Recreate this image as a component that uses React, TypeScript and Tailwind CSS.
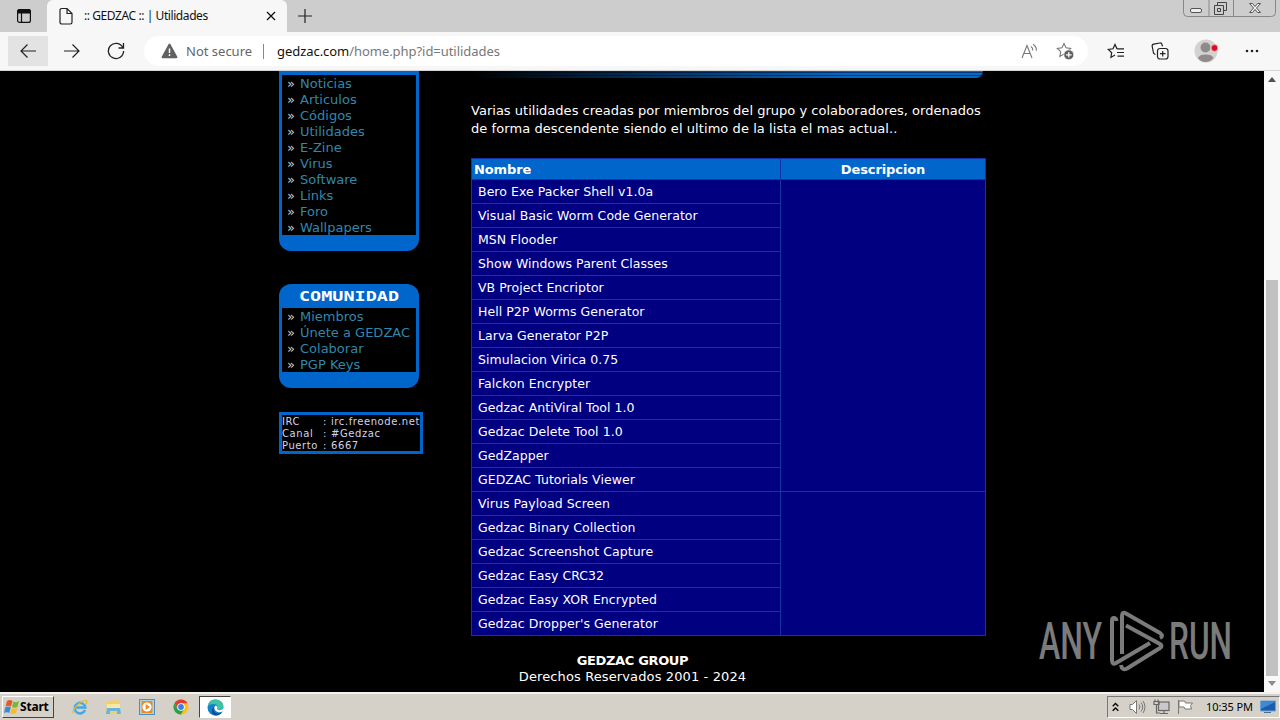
import React from 'react';

const sections = ['Noticias', 'Articulos', 'Códigos', 'Utilidades', 'E-Zine', 'Virus', 'Software', 'Links', 'Foro', 'Wallpapers'];
const community = ['Miembros', 'Únete a GEDZAC', 'Colaborar', 'PGP Keys'];
const tools = [
  'Bero Exe Packer Shell v1.0a',
  'Visual Basic Worm Code Generator',
  'MSN Flooder',
  'Show Windows Parent Classes',
  'VB Project Encriptor',
  'Hell P2P Worms Generator',
  'Larva Generator P2P',
  'Simulacion Virica 0.75',
  'Falckon Encrypter',
  'Gedzac AntiViral Tool 1.0',
  'Gedzac Delete Tool 1.0',
  'GedZapper',
  'GEDZAC Tutorials Viewer',
  'Virus Payload Screen',
  'Gedzac Binary Collection',
  'Gedzac Screenshot Capture',
  'Gedzac Easy CRC32',
  'Gedzac Easy XOR Encrypted',
  "Gedzac Dropper's Generator",
];

function TabStrip() {
  return (
    <div className="flex h-[32px] bg-[#cdcdcd]">
      <div className="flex w-[47px] items-center justify-center rounded-br-[6px]">
        <svg className="size-[16px]" viewBox="0 0 16 16" fill="none" stroke="#111" strokeWidth="1.2">
          <rect x="1.6" y="1.6" width="12.8" height="12.8" rx="2" />
          <path d="M1.6 5V3.5a2 2 0 0 1 2-2h8.800a2 2 0 0 1 2 2V5z" fill="#111" />
          <path d="M5.500 5v9.500" />
        </svg>
      </div>
      <div className="flex w-[240px] items-center rounded-t-[6px] bg-[#f7f7f7] pl-[12px]">
        <svg className="h-[18px] w-[14px]" viewBox="0 0 14 18" fill="none" stroke="#222" strokeWidth="1.2">
          <path d="M1 3.200A1.700 1.700 0 0 1 2.700 1.500H8l5 5v8.800a1.700 1.700 0 0 1-1.700 1.700H2.700A1.700 1.700 0 0 1 1 15.300z M8 1.500v5h5" />
        </svg>
        <span className="ml-[11px] w-[182px] text-[12px] tracking-[-0.42px] whitespace-pre text-[#111]">:: GEDZAC :: | Utilidades</span>
        <svg className="size-[10px]" viewBox="0 0 10 10" stroke="#111" strokeWidth="1.300">
          <path d="M1 1l8 8M9 1l-8 8" />
        </svg>
      </div>
      <svg className="mt-[8px] ml-[10px] size-[16px]" viewBox="0 0 16 16" stroke="#222" strokeWidth="1.200">
        <path d="M8 1v14M1 8h14" />
      </svg>
      <svg className="ml-[870px] h-[18px] w-[94px]" viewBox="0 0 94 18" fill="none">
        <path d="M.5 0v12.500a4 4 0 0 0 4 4h84a4 4 0 0 0 4-4V0M26 0v16.500M50.500 0v16.500" stroke="#888" />
        <rect x="7.500" y="8.500" width="11" height="4" rx="1.500" fill="#eee" stroke="#555" />
        <path d="M34.500 2.500h9v8h-3M31.500 5.500h9v9h-9zM34.500 8.500h3v3h-3zM34.500 2.500v3" stroke="#444" />
        <path d="M66.500 3.500h3l2.500 3 2.500-3h3l-4 4.500 4 4.500h-3l-2.500-3-2.500 3h-3l4-4.500z" stroke="#555" fill="#eee" />
      </svg>
    </div>
  );
}

const star = 'M8 1.500l2 4.300 4.700.6-3.400 3.300.8 4.700L8 12.100l-4.100 2.300.8-4.700L1.300 6.400 6 5.800z';

function Toolbar() {
  return (
    <div className="flex h-[39px] items-center border-b border-[#d5d5d5] bg-[#f7f7f7]">
      <div className="ml-[8px] flex h-[30px] w-[40px] items-center justify-center bg-[#e3e3e3]">
        <svg className="h-[16px] w-[18px]" viewBox="0 0 18 16" fill="none" stroke="#222" strokeWidth="1.200">
          <path d="M17 8H2M8.500 1.500L2 8l6.500 6.500" />
        </svg>
      </div>
      <svg className="ml-[15px] h-[16px] w-[18px]" viewBox="0 0 18 16" fill="none" stroke="#222" strokeWidth="1.200">
        <path d="M1 8h15M9.500 1.500L16 8l-6.500 6.500" />
      </svg>
      <svg className="ml-[26px] size-[18px]" viewBox="0 0 18 18" fill="none" stroke="#222" strokeWidth="1.300">
        <path d="M15.800 5.500A7.600 7.600 0 1 0 16.600 9M16.500 1v5h-5" />
      </svg>
      <div className="ml-[19px] flex h-[30px] w-[944px] items-center rounded-full bg-white">
        <svg className="ml-[17px] h-[16px] w-[17px]" viewBox="0 0 17 16">
          <path d="M7.500 1.200a1.100 1.100 0 0 1 2 0l6.800 12.500a1 1 0 0 1-1 1.500H1.700a1 1 0 0 1-1-1.500z" fill="#616161" />
          <path d="M8.500 5.500v4.500M8.500 11.300v1.600" stroke="white" strokeWidth="1.500" />
        </svg>
        <span className="ml-[8px] w-[77px] pt-px text-[13px] whitespace-nowrap text-[#666]">Not secure</span>
        <span className="h-[15px] w-px bg-[#888]" />
        <span className="ml-[13px] w-[744px] pt-px text-[13px] tracking-[-0.05px] whitespace-nowrap text-[#777]">
          <span className="text-[#111]">gedzac.com</span>/home.php?id=utilidades
        </span>
        <svg className="h-[16px] w-[17px] shrink-0" viewBox="0 0 17 16" fill="none" stroke="#777" strokeWidth="1.100">
          <path d="M1 15L6 2.500 11 15M2.800 10.500h6.500M10 3.500q2 1.500 1.800 4M12 1.200q3.800 2.500 3.300 6.500" />
        </svg>
        <svg className="ml-[18px] h-[18px] w-[18px] shrink-0" viewBox="0 0 18 18">
          <path d={star} fill="none" stroke="#777" strokeWidth="1.100" />
          <circle cx="12.800" cy="12.800" r="4.900" fill="#5f5f5f" stroke="white" strokeWidth=".6" />
          <path d="M12.800 10v5.600M10 12.800h5.600" stroke="white" strokeWidth="1.200" />
        </svg>
      </div>
      <svg className="ml-[19px] h-[16px] w-[18px]" viewBox="0 0 18 16" fill="none" stroke="#222" strokeWidth="1.200">
        <path d="M11 5.800L9.900 5.600 8 1.500 6 5.800l-4.700.6 3.400 3.300-.8 4.700L8 12M11 5.800h6M10 9.500h7M10.500 13.200h6.500" />
      </svg>
      <svg className="ml-[26px] size-[18px]" viewBox="0 0 18 18" fill="none" stroke="#222" strokeWidth="1.200">
        <rect x="6.500" y="6.500" width="10.500" height="10.500" rx="2.500" />
        <path d="M11.700 9v5.500M9 11.700h5.500M4.500 12.500L3.500 12A2 2 0 0 1 2.300 10L1.200 4.500A2 2 0 0 1 2.800 2.200l6-1.200A2 2 0 0 1 11 2.500l.5 1.800" />
      </svg>
      <svg className="ml-[25px] size-[24px]" viewBox="0 0 24 24">
        <circle cx="12" cy="12" r="11.500" fill="#d4d2d0" />
        <circle cx="11.500" cy="8.500" r="5" fill="#8e8b89" />
        <path d="M4 19a8 4.500 0 0 1 15.500 0q-3 4-8 4t-7.500-4z" fill="#8e8b89" />
        <circle cx="20.500" cy="9" r="3.400" fill="#e00b1c" stroke="#f4d5d5" strokeWidth=".7" />
      </svg>
      <svg className="ml-[27px] h-[4px] w-[14px]" viewBox="0 0 14 4" fill="#222">
        <circle cx="2" cy="2" r="1.300" /><circle cx="7" cy="2" r="1.300" /><circle cx="12" cy="2" r="1.300" />
      </svg>
    </div>
  );
}

function MenuList({ items }: { items: string[] }) {
  return (
    <ul className="ml-[3px] w-[134px] bg-black pt-px pl-[5px] text-[13px] leading-[16px]">
      {items.map((item) => (
        <li key={item} className="flex h-[16px] whitespace-nowrap last:h-[15px]">
          <span className="w-[13px] text-[#ccc]">»</span>
          <a className="text-[#2f88ad]">{item}</a>
        </li>
      ))}
    </ul>
  );
}

function Sidebar() {
  return (
    <aside className="ml-[279px] w-[144px] shrink-0">
      <section className="h-[180px] w-[140px] rounded-b-[12px] bg-[#0066cc] pt-[4px]">
        <MenuList items={sections} />
      </section>
      <section className="mt-[33px] h-[104px] w-[140px] rounded-[12px] bg-[#0066cc]">
        <h2 className="flex h-[24px] items-center justify-center">
          <svg className="h-[16px] w-[102px]" viewBox="0 0 102 16">
            <text x="1" y="13" textLength="100" lengthAdjust="spacingAndGlyphs" fill="white" className="font-['DejaVu_Sans_Mono',monospace] text-[14px] font-bold">COMUNIDAD</text>
          </svg>
        </h2>
        <MenuList items={community} />
      </section>
      <section className="mt-[24px] h-[42px] w-[144px] border-[3px] border-[#0066cc] pt-px text-[10px] leading-[12px] tracking-[0.58px] whitespace-nowrap text-[#d2d2ee]">
        <div className="flex"><span className="w-[41px]">IRC</span><span className="w-[8px]">:</span><span>irc.freenode.net</span></div>
        <div className="flex"><span className="w-[41px]">Canal</span><span className="w-[8px]">:</span><span>#Gedzac</span></div>
        <div className="flex"><span className="w-[41px]">Puerto</span><span className="w-[8px]">:</span><span>6667</span></div>
      </section>
    </aside>
  );
}

function Main() {
  return (
    <main className="ml-[48px] w-[515px]">
      <div className="h-[7px] w-[512px] rounded-br-[10px] bg-[linear-gradient(90deg,#000_0%,transparent_75%),repeating-linear-gradient(0deg,#0768c4_0px,#0768c4_2px,#003a80_2px,#003a80_3px)]" />
      <p className="mt-[24px] w-[511px] text-[13px] leading-[18px] text-white">
        <span className="block h-[18px] whitespace-nowrap tracking-[0.02px]">Varias utilidades creadas por miembros del grupo y colaboradores, ordenados</span>
        <span className="block h-[18px] whitespace-nowrap tracking-[0.07px]">de forma descendente siendo el ultimo de la lista el mas actual..</span>
      </p>
      <div className="mt-[20px] grid w-[515px] grid-cols-[308px_205px] border border-[#1434a4] bg-[#000080] text-[12.5px] text-white">
        <div className="h-[21px] border-b border-[#1434a4] bg-[#0066cc] pl-[2px] text-[13px] leading-[21px] font-bold tracking-[-0.1px]">Nombre</div>
        <div className="h-[21px] border-b border-l border-[#1434a4] bg-[#0066cc] text-center text-[13px] leading-[21px] font-bold tracking-[-0.1px]">Descripcion</div>
        <div>
          {tools.map((tool) => (
            <div key={tool} className="h-[24px] border-b border-[#1434a4] pl-[6px] leading-[24px] tracking-[0.05px] whitespace-nowrap last:h-[23px] last:border-b-0">{tool}</div>
          ))}
        </div>
        <div className="border-l border-[#1434a4]">
          <div className="h-[312px] border-b border-[#1434a4]" />
        </div>
      </div>
      <footer className="w-[323px] pt-[17px] text-center text-[13px] leading-[16px] whitespace-nowrap text-white">
        <div className="font-bold tracking-[-0.35px]">GEDZAC GROUP</div>
        <div className="tracking-[0.12px]">Derechos Reservados 2001 - 2024</div>
      </footer>
    </main>
  );
}

function Watermark() {
  return (
    <svg className="absolute top-[600px] left-[1030px] h-[80px] w-[220px] overflow-visible" viewBox="-6 -8 220 80">
      <g fill="#7b7b7b" className="font-[Roboto,sans-serif] text-[52px] font-medium">
        <text x="3" y="51" textLength="63" lengthAdjust="spacingAndGlyphs">ANY</text>
        <text x="133" y="51" textLength="63" lengthAdjust="spacingAndGlyphs">RUN</text>
      </g>
      <g fill="none" stroke="#7b7b7b" strokeWidth="4" strokeLinejoin="round">
        <path d="M80.500 13Q80 10 78 10Q76 10 76 13V52Q76 57.500 80 55L114 35" />
        <path d="M86 46V8Q86 3 90 5.500L124 25Q128 28 124 30" />
        <path d="M90 17.500L124 36Q127 38 124 40L91 60.500Q86 63 85 57" />
      </g>
    </svg>
  );
}

function Taskbar() {
  return (
    <div className="flex h-[28px] items-center border-t-2 border-[#f4f2ec] bg-[#d5d1c9]">
      <button className="ml-[2px] flex h-[22px] w-[52px] items-center border border-t-white border-r-[#444] border-b-[#444] border-l-white pl-px text-black">
        <svg className="size-[16px]" viewBox="0 0 16 16">
          <path d="M3 2q3-2 5.500 0L7 7.500Q4 6 1.500 7.500z" fill="#e8562a" />
          <path d="M9.300 2.500q3 1.500 5.700-.5L13.500 8q-3 1.500-5.500 0z" fill="#79b63c" />
          <path d="M1.300 8.300q3-1.500 5.500 0L5.300 14Q3 12.500 0 14z" fill="#3d8bd4" />
          <path d="M7.800 9q3 1.300 5.500 0L12 14.300q-3 1.500-5.700 0z" fill="#f6bd27" />
        </svg>
        <span className="text-[12px] font-bold tracking-[-0.2px]">Start</span>
      </button>
      <svg className="ml-[18px] size-[16px]" viewBox="0 0 16 16" fill="none">
        <path d="M13 11A5.300 5.300 0 1 1 13.300 8.500H4" stroke="#43a8e5" strokeWidth="2.400" />
        <path d="M1.500 14.500C-1 11 9 1 14.500 1.500q1.500 1-1 4" stroke="#e8b92f" strokeWidth="1.200" />
      </svg>
      <svg className="ml-[17px] size-[17px]" viewBox="0 0 17 17">
        <path d="M1 3h5l1-1.500h7V15H2z" fill="#f3cf69" />
        <path d="M2 5h13v7H2z" fill="#f9e7a5" />
        <path d="M2 9h13l1 6h-4v-3H5v3H1z" fill="#65b5df" />
      </svg>
      <svg className="ml-[17px] size-[16px]" viewBox="0 0 16 16">
        <rect x=".5" y=".5" width="15" height="15" fill="#a9d4ef" stroke="#4a8fc0" />
        <rect x="2.500" y="2" width="11" height="12" rx="1" fill="#f18b18" />
        <circle cx="8" cy="8" r="4.600" fill="white" />
        <path d="M6.600 5v6L11 8z" fill="#f18b18" />
      </svg>
      <svg className="ml-[18px] size-[16px]" viewBox="0 0 16 16">
        <circle cx="8" cy="8" r="7.500" fill="#fbc116" />
        <path d="M1.500 4.250A7.500 7.500 0 0 1 14.500 4.250H8L5 9.750z" fill="#e33b2e" />
        <path d="M1.500 4.250A7.500 7.500 0 0 0 8 15.500l3.200-5.700L8 11.500 4.750 9.800z" fill="#2ca14c" />
        <circle cx="8" cy="8" r="3.800" fill="white" /><circle cx="8" cy="8" r="2.900" fill="#3f7de8" />
      </svg>
      <div className="ml-[10px] flex h-[22px] w-[32px] items-center justify-center border border-t-[#444] border-r-white border-b-white border-l-[#444] bg-white">
        <svg className="size-[17px]" viewBox="0 0 16 16">
          <circle cx="8" cy="8" r="7.500" fill="#1680cc" />
          <path d="M.7 7C1 3 4 .5 8 .5c4.500 0 7.500 3 7.500 6 0 2.500-2 4-4.500 4-1.500 0-2-.7-1.500-1.500C10.500 7 9 4.800 6 4.800 3.500 4.800 1.500 6 .7 7z" fill="#3fc3a4" />
          <path d="M6.500 7q-1.500 5 3 6.500 2.500.5 5-1.500Q12 16 8 15.500C4 15 3.500 10 6.500 7z" fill="#124f92" />
          <path d="M7 7.500Q6.300 11 11 12.500q2 .4 4.500-1.500V9q-2 2-4.500 1.500-1.500 0-1.500-1.500 1-1.500-.5-2.500-1.500-.5-2 1z" fill="white" />
        </svg>
      </div>
      <div className="ml-auto flex h-[22px] w-[173px] items-center border border-t-[#777] border-r-white border-b-white border-l-[#777]">
        <svg className="ml-[4px] h-[10px] w-[7px]" viewBox="0 0 7 10" fill="none" stroke="black" strokeWidth="1.300">
          <path d="M.7 4.300l2.800-2.800 2.800 2.800M.7 8.800L3.500 6l2.800 2.800" />
        </svg>
        <svg className="ml-[10px] h-[16px] w-[17px]" viewBox="0 0 17 16" fill="none" stroke="#777" strokeWidth="1">
          <path d="M1 5.500h2.500l4-4v13l-4-4H1z" fill="#fff" />
          <path d="M10 5.500q2 2.500 0 5M12 3.500q3.500 4.500 0 9M14 2q4 6 0 12" />
        </svg>
        <svg className="ml-[7px] h-[16px] w-[17px]" viewBox="0 0 17 16" fill="none" stroke="#666" strokeWidth="1.200">
          <rect x="5.500" y="3" width="10.500" height="8.500" fill="#c9c9c9" />
          <path d="M7 14.500h8M11 11.500v3" />
          <path d="M1 2.500h5v3H1zM2 .5v2M5 .5v2M3.500 5.500V14H7" />
        </svg>
        <svg className="ml-[7px] h-[16px] w-[17px]" viewBox="0 0 17 16" fill="#fff" stroke="#777" strokeWidth="1">
          <path d="M1.500 1v14M2 2h5.500l1 2h7l-2 2.500 1 3.500H8l-1-2H2z" />
        </svg>
        <span className="ml-[12px] w-[46px] text-[11px] tracking-[-0.1px] whitespace-nowrap text-black">10:35 PM</span>
        <svg className="ml-[8px] h-[14px] w-[16px]" viewBox="0 0 16 14">
          <path d="M.5 1h15v10H.5z" fill="#1b5dac" stroke="#6aa1d8" /><path d="M1 9L15 2v-.5H1z" fill="#3d8ad2" /><path d="M4 12h7v1H4z" fill="#4c6c90" />
        </svg>
      </div>
    </div>
  );
}

export default function App() {
  return (
    <div className="relative flex h-[720px] w-[1280px] flex-col overflow-hidden bg-black font-['Noto_Sans',sans-serif]">
      <TabStrip />
      <Toolbar />
      <div className="flex h-[621px] bg-black font-['DejaVu_Sans',sans-serif]">
        <Sidebar />
        <Main />
        <div className="ml-auto flex w-[16px] shrink-0 flex-col items-center bg-[#f8f8f8]">
          <svg className="mt-[6px] h-[6px] w-[8px]" viewBox="0 0 8 6" fill="#505050"><path d="M4 0l4 5H0z" /></svg>
          <div className="mt-[197px] h-[396px] w-[12px] bg-[#c1c1c1]" />
          <svg className="mt-[5px] h-[6px] w-[8px]" viewBox="0 0 8 6" fill="#8a8a8a"><path d="M4 5L0 0h8z" /></svg>
        </div>
      </div>
      <Taskbar />
      <Watermark />
    </div>
  );
}
